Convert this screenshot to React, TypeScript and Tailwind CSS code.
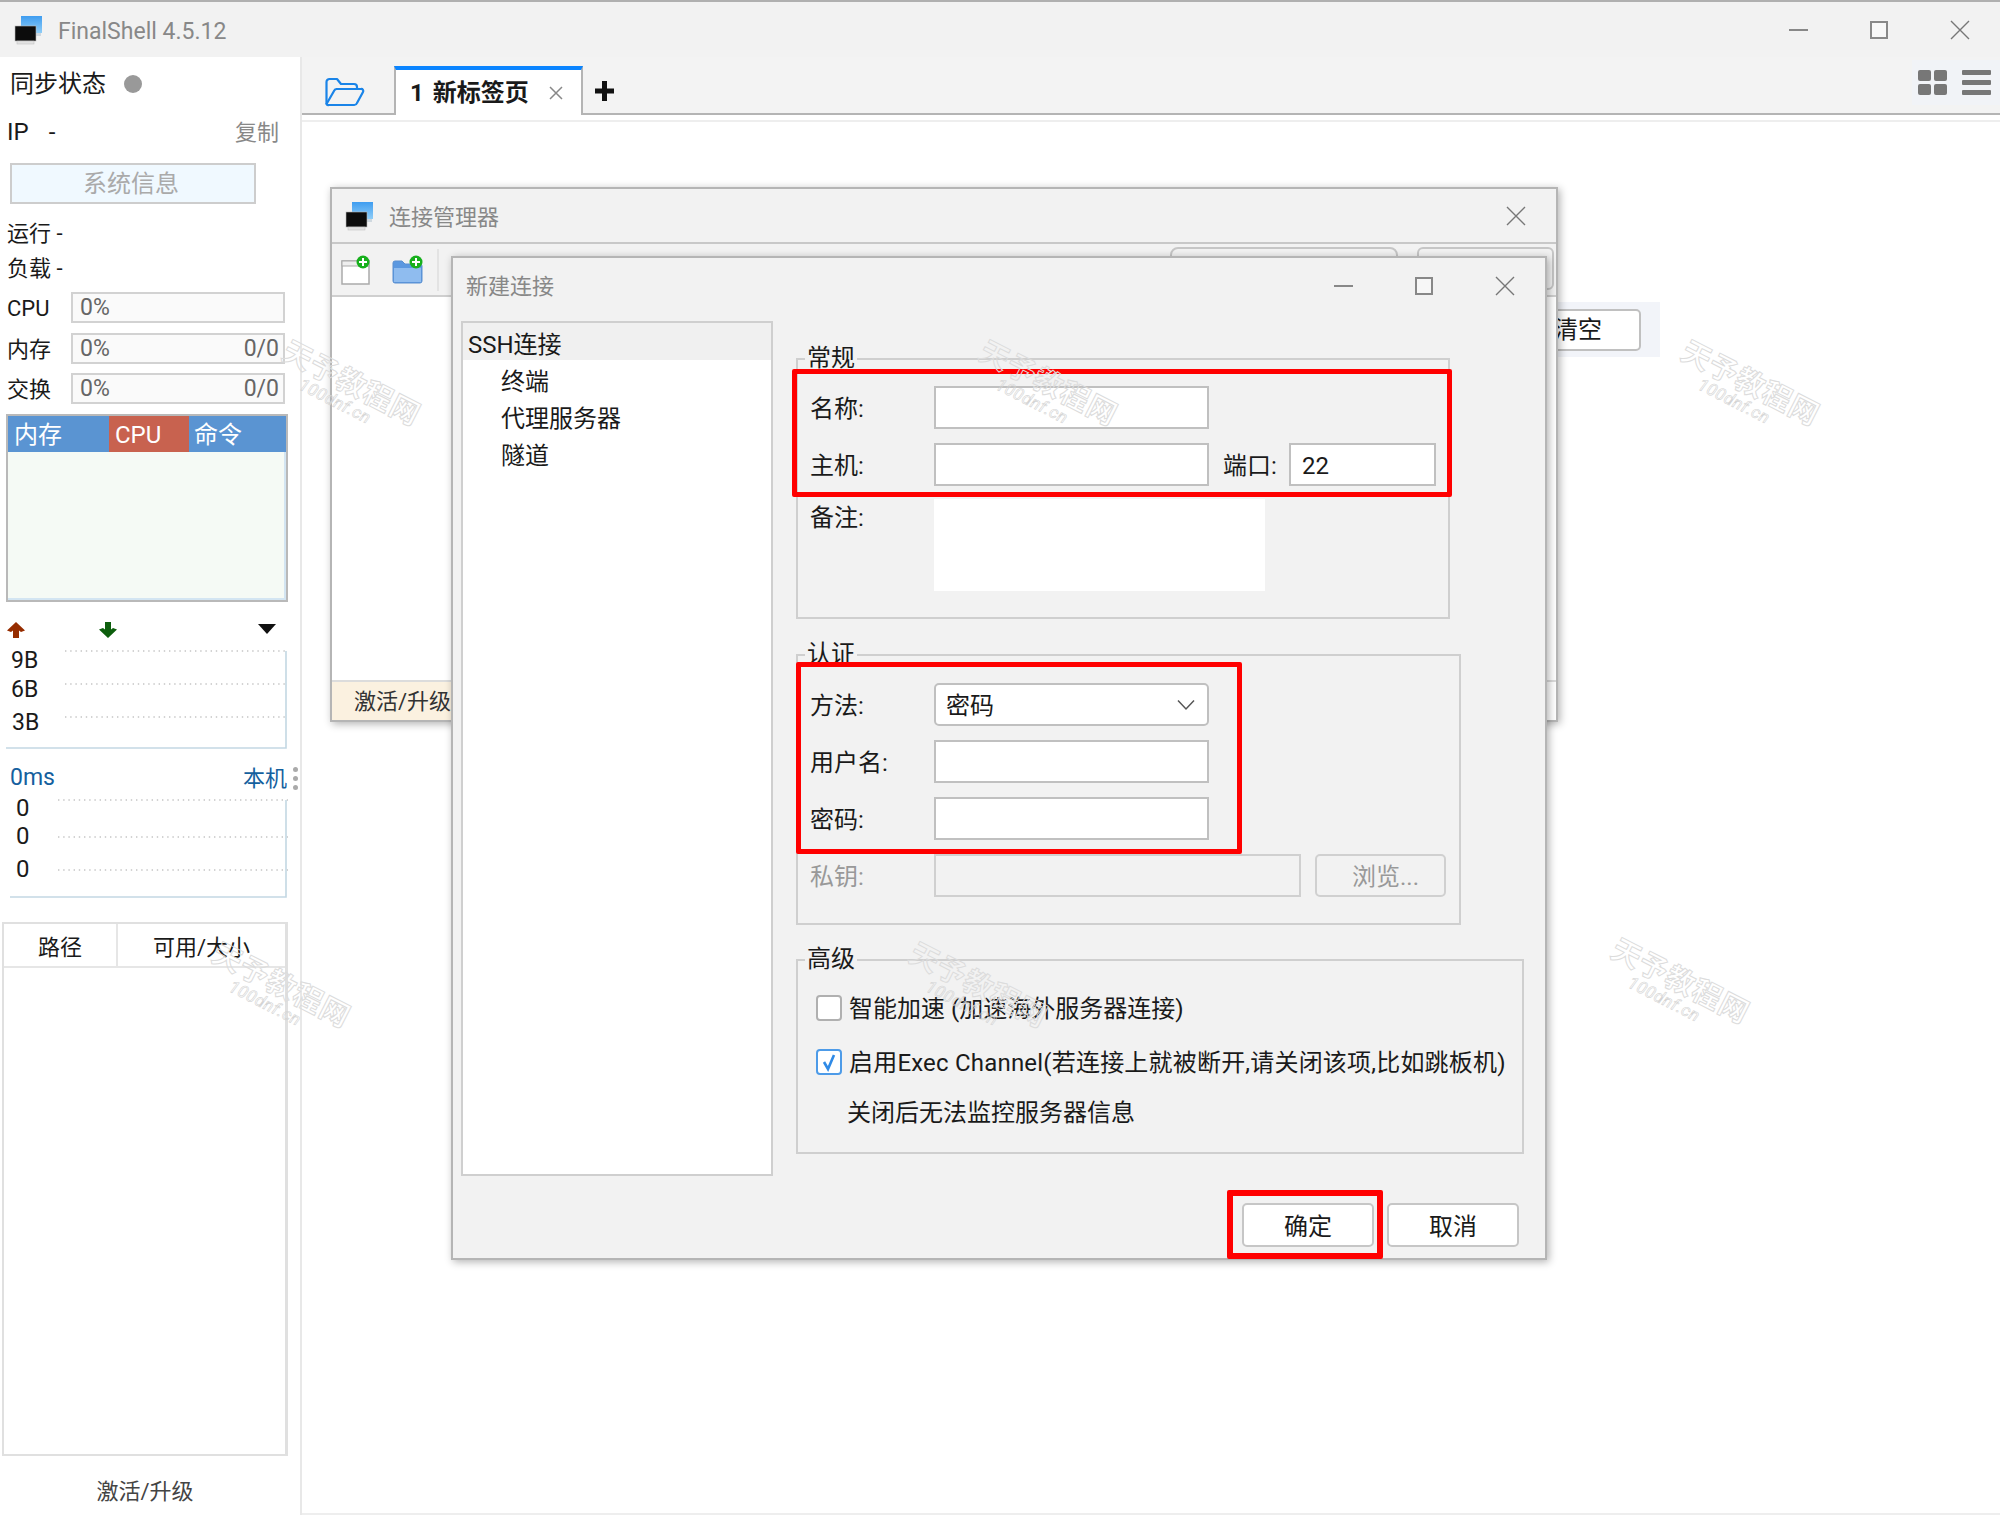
import React from "react";

function AppIcon() {
  return (
    <svg width="28" height="30" viewBox="0 0 28 30" className="shrink-0">
      <defs>
        <linearGradient id="blueScreen" x1="0" y1="0" x2="0" y2="1">
          <stop offset="0" stopColor="#3f9df0" />
          <stop offset="1" stopColor="#8fcdf7" />
        </linearGradient>
      </defs>
      <rect x="7" y="1" width="21" height="17" fill="url(#blueScreen)" />
      <rect x="22" y="18" width="5" height="3" fill="#cfd8df" />
      <rect x="1" y="11" width="21" height="15" fill="#0c0c0c" stroke="#b9b9b9" strokeWidth="0.6" />
      <rect x="3" y="26" width="17" height="3" fill="#e2e2e2" stroke="#bdbdbd" strokeWidth="0.5" />
    </svg>
  );
}

function CloseIcon({ size = 20 }: { size?: number }) {
  return (
    <svg width={size} height={size} viewBox="0 0 20 20" fill="none" stroke="#777" strokeWidth="1.4">
      <path d="M1 1 L19 19 M19 1 L1 19" />
    </svg>
  );
}

function WinButtons() {
  return (
    <div className="flex items-center">
      <div className="w-[19px] h-[2px] bg-[#888]" />
      <div className="w-[18px] h-[18px] ml-[62px] border-2 border-[#888] bg-[#f7f7f7]" />
      <div className="ml-[62px]"><CloseIcon /></div>
    </div>
  );
}

function Meter({ label, right, mt }: { label: string; right?: string; mt: string }) {
  return (
    <div className={`flex items-center h-[31px] ${mt}`}>
      <span className="w-[71px] pl-[7px] pt-[2px] text-[#1a1a1a] text-[22px]">{label}</span>
      <div className="w-[214px] h-full border-2 border-[#d2d2d2] bg-[#fafafa] flex items-center justify-between pl-[7px] pr-[4px] pt-[2px] text-[#666] text-[23px]">
        <span>0%</span>
        {right && <span>{right}</span>}
      </div>
    </div>
  );
}

function Watermark({ x, y }: { x: number; y: number }) {
  return (
    <div
      className="absolute z-50 pointer-events-none flex flex-col items-center w-[150px] rotate-[27deg] -translate-x-1/2 -translate-y-1/2"
      style={{ left: x, top: y }}
    >
      <div className="text-[29px] leading-[32px] font-bold tracking-[1px] text-transparent [-webkit-text-stroke:1px_#dcdcdc] whitespace-nowrap">天予教程网</div>
      <div className="mr-[13px] text-[17px] leading-[15px] tracking-[0.5px] italic text-transparent [-webkit-text-stroke:0.6px_#d4d4d4] whitespace-nowrap">100dnf.cn</div>
    </div>
  );
}

function Legend({ children }: { children: React.ReactNode }) {
  return (
    <span className="absolute left-[7px] -top-[18px] bg-[#f2f2f2] px-[2px] leading-[32px] text-[#1a1a1a]">{children}</span>
  );
}

function Field({ label, w = "w-[275px]", mt, disabled }: { label: string; w?: string; mt?: string; disabled?: boolean }) {
  return (
    <div className={`flex items-center h-[43px] ${mt ?? ""}`}>
      <span className={`w-[124px] pt-[2px] ${disabled ? "text-[#999]" : "text-[#1a1a1a]"}`}>{label}</span>
      <div className={`${w} h-full border-2 ${disabled ? "border-[#d0d0d0] bg-[#f2f2f2]" : "border-[#c0c0c0] bg-white"}`} />
    </div>
  );
}

function Check({ checked }: { checked?: boolean }) {
  return (
    <div className={`w-[26px] h-[26px] rounded-[4px] border-2 bg-white flex items-center justify-center shrink-0 ${checked ? "border-[#4d9be8]" : "border-[#b0b0b0]"}`}>
      {checked && (
        <svg width="18" height="20" viewBox="0 0 18 20" fill="none" stroke="#2f8ae6" strokeWidth="2.6">
          <path d="M4 10 L8 17 L14 3" />
        </svg>
      )}
    </div>
  );
}

function ChartLines({ h, lines, bottom, x0, bx }: { h: number; lines: number[]; bottom: number; x0: number; bx: number }) {
  return (
    <svg width="290" height={h} className="absolute left-0 top-0">
      {lines.map((y) => (
        <line key={y} x1={x0} x2="288" y1={y} y2={y} stroke="#a8a8a8" strokeWidth="1.2" strokeDasharray="1.4 3.8" />
      ))}
      <path d={`M286 ${lines[0]} V${bottom} H${bx}`} fill="none" stroke="#c3d8e3" strokeWidth="1.6" />
    </svg>
  );
}

function Sidebar() {
  return (
    <aside className="relative w-[302px] shrink-0 border-r-2 border-[#e8e8e8] flex flex-col">
      <div className="h-[54px] pl-[10px] flex items-center">
        <span className="text-[#1a1a1a]">同步状态</span>
        <span className="ml-[18px] w-[18px] h-[18px] rounded-full bg-[#999]" />
      </div>
      <div className="h-[40px] pl-[7px] pr-[21px] pt-[2px] flex items-center">
        <span className="text-[#1a1a1a]">IP</span>
        <span className="ml-[20px] text-[#1a1a1a]">-</span>
        <span className="ml-auto text-[#888] text-[22px]">复制</span>
      </div>
      <div className="mt-[12px] ml-[10px] w-[246px] h-[41px] border-2 border-[#cdcdcd] bg-[#f0f9ff] flex items-center justify-center pr-[4px] text-[#aaa]">系统信息</div>
      <div className="mt-[11px] h-[35px] pl-[7px] pt-[2px] flex items-center text-[#1a1a1a] text-[22px]">运行 -</div>
      <div className="h-[35px] pl-[7px] pt-[2px] flex items-center text-[#1a1a1a] text-[22px]">负载 -</div>
      <Meter label="CPU" mt="mt-[7px]" />
      <Meter label="内存" right="0/0" mt="mt-[10px]" />
      <Meter label="交换" right="0/0" mt="mt-[9px]" />

      <div className="mt-[10px] ml-[6px] w-[282px] h-[188px] border-2 border-[#b9b9b9] flex flex-col bg-[#f5faf5]">
        <div className="h-[36px] flex text-white shrink-0">
          <div className="w-[101px] bg-[#5a94d2] pl-[6px] pt-[2px] flex items-center">内存</div>
          <div className="w-[80px] bg-[#c8624f] pl-[6px] pt-[2px] flex items-center">CPU</div>
          <div className="flex-1 bg-[#5a94d2] pl-[5px] pt-[2px] flex items-center">命令</div>
        </div>
        <div className="flex-1 border-r-2 border-b-2 border-[#d3e5f2]" />
      </div>

      <div className="mt-[14px] h-[28px] relative flex items-center">
        <svg width="18" height="18" viewBox="0 0 18 18" className="ml-[7px]">
          <path d="M9 1 L18 9.5 L14 11 L12 9.5 V17 H6 V9.5 L4 11 L0 9.5 Z" fill="#962d00" />
        </svg>
        <svg width="18" height="18" viewBox="0 0 18 18" className="ml-[74px]">
          <path d="M9 17 L18 8.5 L14 7 L12 8.5 V1 H6 V8.5 L4 7 L0 8.5 Z" fill="#0d5e0d" />
        </svg>
        <svg width="18" height="10" viewBox="0 0 18 10" className="ml-[141px] -mt-[2px]">
          <path d="M0 0 H18 L9 10 Z" fill="#111" />
        </svg>
      </div>

      <div className="relative h-[106px] text-[#1a1a1a] text-[23px]">
        <ChartLines h={106} lines={[7, 40, 73]} bottom={104} x0={65} bx={6} />
        <span className="absolute left-[11px] top-[1px] leading-[32px]">9B</span>
        <span className="absolute left-[11px] top-[30px] leading-[32px]">6B</span>
        <span className="absolute left-[12px] top-[63px] leading-[32px]">3B</span>
      </div>

      <div className="mt-[10px] h-[36px] pl-[10px] w-[287px] flex items-center justify-between text-[#14609e] text-[23px]">
        <span>0ms</span>
        <span className="text-[22px]">本机</span>
        <span className="absolute left-[293px] flex flex-col gap-[4px]">
          <span className="w-[5px] h-[5px] rounded-full bg-[#aaa]" />
          <span className="w-[5px] h-[5px] rounded-full bg-[#aaa]" />
          <span className="w-[5px] h-[5px] rounded-full bg-[#aaa]" />
        </span>
      </div>

      <div className="relative h-[103px] text-[#1a1a1a]">
        <ChartLines h={103} lines={[4, 41, 74]} bottom={101} x0={58} bx={10} />
        <span className="absolute left-[16px] -top-[4px] leading-[32px]">0</span>
        <span className="absolute left-[16px] top-[24px] leading-[32px]">0</span>
        <span className="absolute left-[16px] top-[57px] leading-[32px]">0</span>
      </div>

      <div className="mt-[23px] ml-[2px] w-[286px] h-[534px] border-2 border-r-[3px] border-[#e0e0e0] flex flex-col">
        <div className="h-[44px] border-b-2 border-[#e6e6e6] flex text-[#1a1a1a] text-[22px]">
          <div className="w-[114px] border-r-2 border-[#e6e6e6] flex items-end justify-center pb-[2px] leading-[32px]">路径</div>
          <div className="flex-1 flex items-end justify-center pb-[2px] leading-[32px]">可用/大小</div>
        </div>
      </div>
      <div className="w-[290px] pt-[19px] text-center text-[#444] text-[22px]">激活/升级</div>
    </aside>
  );
}

function Toolbar() {
  return (
    <div className="h-[58px] bg-[#f3f3f3] border-b-2 border-[#b4b4b4] flex items-end shrink-0">
      <div className="w-[92px] self-center flex justify-end pr-[29px] mt-[14px]">
        <svg width="40" height="30" viewBox="0 0 40 30" fill="none" stroke="#1a84e8" strokeWidth="2.2" strokeLinejoin="round">
          <path d="M1.5 27 V5 a3 3 0 0 1 3-3 H12 l4 5 H29 a3 3 0 0 1 3 3 V12" />
          <path d="M1.5 27 L9 14 a3 3 0 0 1 2.5-2 H36 a2 2 0 0 1 2 3 L32 26 a3 3 0 0 1-3 2 H4 a2.5 2.5 0 0 1-2.5-1Z" />
        </svg>
      </div>
      <div className="w-[189px] h-[49px] -mb-[2px] bg-white border-x-2 border-[#b4b4b4] border-t-[4px] border-t-[#0a84ff] flex items-center pl-[14px] font-bold text-[#1a1a1a]">
        <span>1</span>
        <span className="ml-[9px]">新标签页</span>
        <span className="ml-[20px]"><svg width="14" height="14" viewBox="0 0 14 14" stroke="#888" strokeWidth="1.5"><path d="M1 1 L13 13 M13 1 L1 13" /></svg></span>
      </div>
      <div className="ml-[12px] mb-[12px]">
        <svg width="19" height="20" viewBox="0 0 19 20" fill="#111"><path d="M7 0 H12 V7.5 H19 V12.5 H12 V20 H7 V12.5 H0 V7.5 H7 Z" /></svg>
      </div>
      <div className="ml-auto w-[88px] h-[45px] mb-[8px] bg-[#f1f3f7] flex items-center pl-[6px]">
        <div className="grid grid-cols-2 gap-[3px]">
          <span className="w-[13px] h-[11px] rounded-[2px] bg-[#777]" />
          <span className="w-[13px] h-[11px] rounded-[2px] bg-[#777]" />
          <span className="w-[13px] h-[11px] rounded-[2px] bg-[#777]" />
          <span className="w-[13px] h-[11px] rounded-[2px] bg-[#777]" />
        </div>
        <div className="ml-[15px] flex flex-col gap-[5px]">
          <span className="w-[29px] h-[5px] rounded-[1px] bg-[#777]" />
          <span className="w-[29px] h-[5px] rounded-[1px] bg-[#777]" />
          <span className="w-[29px] h-[5px] rounded-[1px] bg-[#777]" />
        </div>
      </div>
    </div>
  );
}

function ManagerWindow() {
  return (
    <div className="absolute left-[28px] top-[65px] w-[1228px] h-[535px] border-2 border-[#b5b5b5] bg-[#f2f2f2] shadow-[2px_2px_8px_rgba(0,0,0,0.3)] flex flex-col">
      <div className="h-[55px] border-b-2 border-[#c8c8c8] flex items-center pl-[13px] pr-[30px] shrink-0">
        <AppIcon />
        <span className="ml-[16px] pt-[4px] text-[22px] text-[#888]">连接管理器</span>
        <div className="ml-auto"><CloseIcon /></div>
      </div>
      <div className="h-[53px] border-b-2 border-[#cfcfcf] flex items-center relative shrink-0">
        <svg width="30" height="30" viewBox="0 0 30 30" className="ml-[9px]">
          <rect x="1" y="6" width="27" height="23" fill="#fff" stroke="#aaa" strokeWidth="1.5" />
          <rect x="1" y="6" width="27" height="5" fill="#eee" stroke="#aaa" strokeWidth="1" />
          <circle cx="22" cy="7" r="6.5" fill="#17b01c" />
          <path d="M22 3 V11 M18 7 H26" stroke="#fff" strokeWidth="2" />
        </svg>
        <svg width="32" height="30" viewBox="0 0 32 30" className="ml-[21px]">
          <path d="M1 8 a2 2 0 0 1 2-2 H10 l3 3 H28 a2 2 0 0 1 2 2 V26 a2 2 0 0 1-2 2 H3 a2 2 0 0 1-2-2Z" fill="#5b98e0" stroke="#5a8fd0" />
          <rect x="2" y="13" width="27" height="14" fill="#8fbcef" />
          <circle cx="24" cy="7" r="6.5" fill="#17b01c" />
          <path d="M24 3 V11 M20 7 H28" stroke="#fff" strokeWidth="2" />
        </svg>
        <div className="ml-[13px] w-[2px] h-[42px] bg-[#e3e3e3]" />
        <div className="absolute left-[838px] top-[3px] w-[228px] h-[43px] rounded-[8px] border-2 border-[#c6c6c6]" />
        <div className="absolute left-[1085px] top-[3px] w-[137px] h-[43px] rounded-[6px] border-2 border-[#c6c6c6]" />
      </div>
      <div className="flex-1 bg-white" />
      <div className="h-[40px] border-t-2 border-[#dcdcdc] bg-white flex shrink-0">
        <div className="w-[121px] bg-[#fbf1e0] pl-[22px] flex items-center text-[#333] text-[22px] whitespace-nowrap">激活/升级</div>
      </div>
    </div>
  );
}

function Dialog() {
  return (
    <div className="absolute left-[149px] top-[134px] w-[1096px] h-[1004px] border-2 border-[#b5b5b5] bg-[#f2f2f2] shadow-[2px_2px_8px_rgba(0,0,0,0.3)] flex flex-col z-10">
      <div className="h-[60px] shrink-0 flex items-center pl-[13px] pr-[30px] -mt-[2px]">
        <span className="text-[22px] text-[#888]">新建连接</span>
        <div className="ml-auto"><WinButtons /></div>
      </div>
      <div className="flex pl-[8px] mt-[2px]">
        <div className="w-[312px] h-[855px] mt-[3px] border-2 border-[#cfcfcf] bg-white flex flex-col text-[#1a1a1a] shrink-0">
          <div className="h-[37px] bg-[#f0f0f0] pl-[5px] pt-[6px] flex items-center">SSH连接</div>
          <div className="h-[37px] pl-[38px] pt-[6px] flex items-center">终端</div>
          <div className="h-[37px] pl-[38px] pt-[6px] flex items-center">代理服务器</div>
          <div className="h-[37px] pl-[38px] pt-[6px] flex items-center">隧道</div>
        </div>
        <div className="ml-[23px] pt-[40px] flex flex-col">
          <div className="relative w-[654px] h-[261px] border-2 border-[#cfcfcf] pt-[26px] pl-[12px]">
            <Legend>常规</Legend>
            <Field label="名称:" />
            <div className="flex items-center mt-[14px]">
              <Field label="主机:" />
              <span className="ml-[14px] w-[66px] pt-[2px] text-[#1a1a1a]">端口:</span>
              <div className="w-[147px] h-[43px] border-2 border-[#c0c0c0] bg-white pl-[11px] pt-[2px] flex items-center text-[#1a1a1a]">22</div>
            </div>
            <div className="flex mt-[13px]">
              <span className="w-[124px] text-[#1a1a1a] leading-[32px] pt-[3px]">备注:</span>
              <div className="w-[331px] h-[92px] bg-white" />
            </div>
          </div>
          <div className="relative mt-[35px] w-[665px] h-[271px] border-2 border-[#cfcfcf] pt-[27px] pl-[12px]">
            <Legend>认证</Legend>
            <div className="flex items-center h-[43px]">
              <span className="w-[124px] pt-[2px] text-[#1a1a1a]">方法:</span>
              <div className="w-[275px] h-full rounded-[5px] border-2 border-[#c0c0c0] bg-white pl-[10px] pr-[12px] flex items-center justify-between text-[#1a1a1a]">
                <span className="pt-[2px]">密码</span>
                <svg width="18" height="12" viewBox="0 0 18 12" fill="none" stroke="#555" strokeWidth="1.5"><path d="M1 1.5 L9 10 L17 1.5" /></svg>
              </div>
            </div>
            <Field label="用户名:" mt="mt-[14px]" />
            <Field label="密码:" mt="mt-[14px]" />
            <div className="flex items-center mt-[14px]">
              <Field label="私钥:" w="w-[367px]" disabled />
              <div className="ml-[14px] w-[131px] h-[43px] rounded-[5px] border-2 border-[#d0d0d0] flex items-center justify-center pl-[10px] pt-[2px] text-[#999]">浏览...</div>
            </div>
          </div>
          <div className="relative mt-[34px] w-[728px] h-[195px] border-2 border-[#cfcfcf] pt-[34px] pl-[18px] text-[#1a1a1a]">
            <Legend>高级</Legend>
            <div className="flex items-center h-[26px]">
              <Check />
              <span className="ml-[7px] pt-[2px] whitespace-nowrap">智能加速 (加速海外服务器连接)</span>
            </div>
            <div className="flex items-center h-[26px] mt-[28px]">
              <Check checked />
              <span className="ml-[7px] pt-[2px] tracking-[0.2px] whitespace-nowrap">启用Exec Channel(若连接上就被断开,请关闭该项,比如跳板机)</span>
            </div>
            <div className="mt-[22px] pl-[31px] leading-[32px]">关闭后无法监控服务器信息</div>
          </div>
          <div className="mt-[49px] w-[723px] flex justify-end gap-[13px] text-[#1a1a1a]">
            <div className="w-[132px] h-[44px] rounded-[5px] border-2 border-[#c6c6c6] bg-white flex items-center justify-center pt-[3px]">确定</div>
            <div className="w-[132px] h-[44px] rounded-[5px] border-2 border-[#c6c6c6] bg-white flex items-center justify-center pt-[3px]">取消</div>
          </div>
        </div>
      </div>
      <div className="absolute left-[339px] top-[111px] w-[660px] h-[128px] border-[5px] border-[#ff0000] rounded-[2px] pointer-events-none" />
      <div className="absolute left-[343px] top-[404px] w-[446px] h-[192px] border-[5px] border-[#ff0000] rounded-[2px] pointer-events-none" />
      <div className="absolute left-[774px] top-[932px] w-[156px] h-[69px] border-[6px] border-[#ff0000] rounded-[2px] pointer-events-none" />
    </div>
  );
}

export default function App() {
  return (
    <div className="relative w-[2000px] h-[1515px] bg-white overflow-hidden flex flex-col text-[24px] leading-normal font-['Roboto','Noto_Sans_CJK_SC',sans-serif]">
      <header className="h-[57px] shrink-0 bg-[#f2f2f2] border-t-2 border-[#b0b0b0] flex items-center pl-[14px] pr-[30px]">
        <AppIcon />
        <span className="ml-[16px] pt-[5px] text-[23px] text-[#888]">FinalShell 4.5.12</span>
        <div className="ml-auto"><WinButtons /></div>
      </header>
      <div className="flex flex-1 min-h-0">
        <Sidebar />
        <main className="flex-1 flex flex-col min-w-0">
          <Toolbar />
          <div className="relative flex-1 mt-[5px] border-t-2 border-b-2 border-[#eeeeee]">
            <div className="absolute right-[340px] top-[180px] w-[110px] h-[55px] bg-[#f2f4f9] flex items-center pr-[19px]">
              <div className="w-full h-[42px] rounded-[5px] border-2 border-[#c0c0c0] bg-white flex items-center justify-end pr-[37px] text-[#1a1a1a]">清空</div>
            </div>
            <ManagerWindow />
            <Dialog />
          </div>
        </main>
      </div>
      <Watermark x={348} y={390} />
      <Watermark x={1045} y={390} />
      <Watermark x={1747} y={390} />
      <Watermark x={278} y={992} />
      <Watermark x={975} y={992} />
      <Watermark x={1677} y={988} />
    </div>
  );
}
